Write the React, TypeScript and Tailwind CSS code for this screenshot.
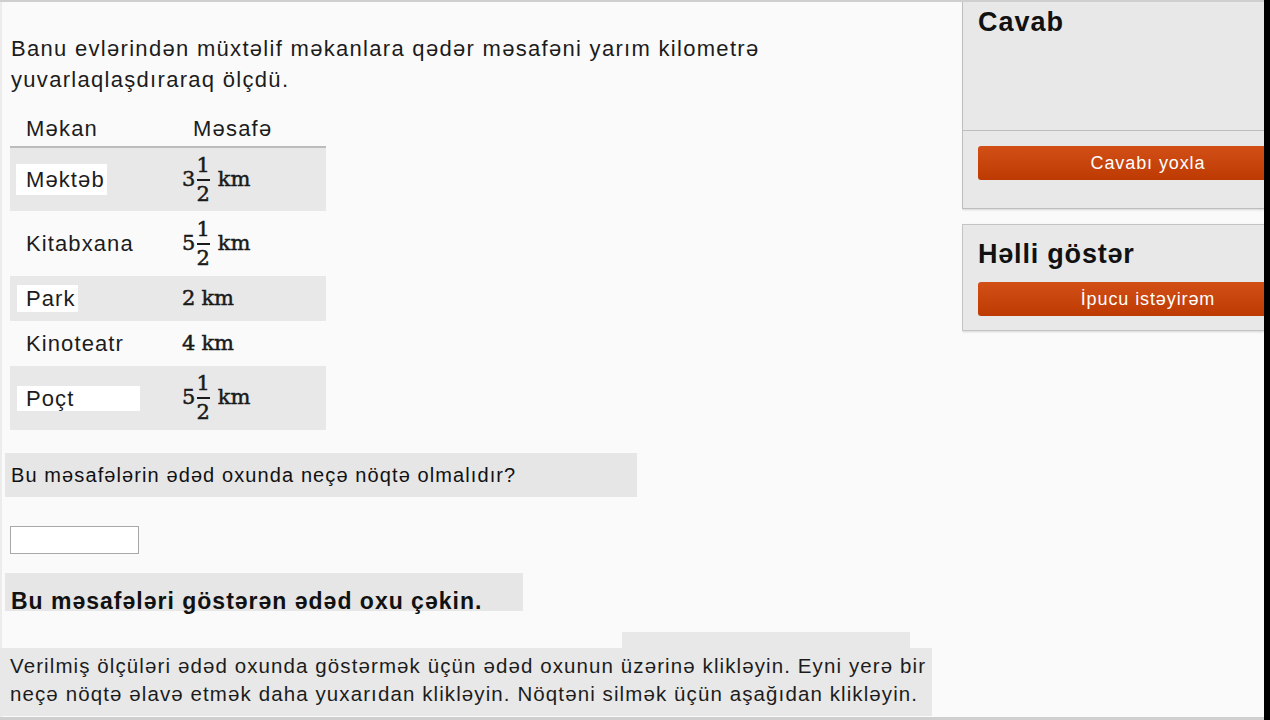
import React from "react";

const sans = "font-['Liberation_Sans','Helvetica_Neue',Arial,sans-serif]";
const serif = "font-['DejaVu_Serif','Liberation_Serif',serif]";

function Distance({ whole, frac }: { whole: string; frac?: boolean }) {
  return (
    <span className={`inline-flex items-center text-[21px] text-[#1a1a1a] [-webkit-text-stroke:0.5px_#1a1a1a] ${serif}`}>
      <span>{whole}</span>
      {frac && (
        <span className="ml-[1px] inline-flex flex-col items-center leading-[25px]">
          <span>1</span>
          <span className="my-[1px] h-[2px] w-[13px] bg-[#1a1a1a]" />
          <span>2</span>
        </span>
      )}
      <span className={frac ? "ml-[8px]" : "ml-[6px]"}>km</span>
    </span>
  );
}

const rows = [
  { place: "Məktəb", whole: "3", frac: true, h: "h-[63px]", gray: true, patch: "bg-white pr-[2px] pl-[10px] -ml-[10px] py-[3px]" },
  { place: "Kitabxana", whole: "5", frac: true, h: "h-[65px]", gray: false, patch: "" },
  { place: "Park", whole: "2", frac: false, h: "h-[45px]", gray: true, patch: "bg-white pr-[2px] pl-[9px] -ml-[9px] py-[1px]" },
  { place: "Kinoteatr", whole: "4", frac: false, h: "h-[45px]", gray: false, patch: "" },
  { place: "Poçt", whole: "5", frac: true, h: "h-[64px]", gray: true, patch: "bg-white pr-[66px] pl-[9px] -ml-[9px]" },
];

function OrangeButton({ label }: { label: string }) {
  return (
    <button className={`ml-[15px] flex h-[34px] w-[340px] shrink-0 items-center justify-center rounded-l-[3px] bg-gradient-to-b from-[#d24f16] to-[#bd3b03] text-[18px] tracking-[0.9px] text-white ${sans}`}>
      {label}
    </button>
  );
}

export default function App() {
  return (
    <div className={`h-[720px] w-[1270px] overflow-hidden bg-[#fafafa] ${sans}`}>
      <div className="flex h-[720px]">
        <div className="flex w-[1264px] flex-col border-t-2 border-b-[3px] border-[#cfcfcf]">
          <div className="flex flex-1">
            <main className="w-[962px] border-l-2 border-[#ececec] pl-[3px] text-[#1c1c1c]">
              <p className="mt-[31px] pl-[6px] text-[22px] leading-[31px] tracking-[1.3px]">
                Banu evlərindən müxtəlif məkanlara qədər məsafəni yarım kilometrə
                <br />
                yuvarlaqlaşdıraraq ölçdü.
              </p>

              <div className="mt-[15px] ml-[5px] w-[316px]">
                <div className="flex h-[38px] items-center border-b-2 border-[#bcbcbc] text-[22px] tracking-[1.2px]">
                  <span className="w-[183px] pl-[16px]">Məkan</span>
                  <span>Məsafə</span>
                </div>
                {rows.map((r) => (
                  <div key={r.place} className={`flex items-center ${r.h} ${r.gray ? "bg-[#e8e8e8]" : ""}`}>
                    <span className="w-[172px] pl-[16px] text-[22px] tracking-[1.1px]">
                      <span className={r.patch}>{r.place}</span>
                    </span>
                    <Distance whole={r.whole} frac={r.frac} />
                  </div>
                ))}
              </div>

              <div className="mt-[23px] flex h-[44px] w-[632px] items-center bg-[#e6e6e6] pl-[6px] text-[20px] tracking-[1.1px] text-[#111]">
                Bu məsafələrin ədəd oxunda neçə nöqtə olmalıdır?
              </div>

              <input className="mt-[29px] ml-[5px] block h-[28px] w-[129px] border border-[#a8a8a8] bg-white" />

              <div className="mt-[19px] flex h-[38px] w-[518px] items-end bg-[#e6e6e6] pl-[6px]">
                <span className="translate-y-[3px] text-[23px] font-bold leading-[26px] tracking-[1px] text-[#111]">
                  Bu məsafələri göstərən ədəd oxu çəkin.
                </span>
              </div>

              <div className="relative mt-[37px] -ml-[5px] w-[932px] bg-[#e8e8e8] pl-[10px] pb-[8px] pt-[4px] text-[20.5px] leading-[28px] tracking-[1.1px] text-[#1c1c1c]">
                <span className="absolute -top-[16px] left-[622px] h-[16px] w-[288px] bg-[#e8e8e8]" />
                Verilmiş ölçüləri ədəd oxunda göstərmək üçün ədəd oxunun üzərinə klikləyin. Eyni yerə bir
                <br />
                neçə nöqtə əlavə etmək daha yuxarıdan klikləyin. Nöqtəni silmək üçün aşağıdan klikləyin.
              </div>
            </main>

            <aside className="w-[302px] overflow-hidden">
              <div className="border-b border-l border-[#bdbdbd] bg-[#e8e8e8] shadow-[0_1px_2px_rgba(0,0,0,0.15)]">
                <h2 className="pl-[15px] pt-[4px] text-[27px] font-bold leading-[32px] tracking-[1px] text-[#111]">Cavab</h2>
                <div className="mt-[92px] border-t border-[#bdbdbd]" />
                <div className="flex pt-[15px] pb-[28px]">
                  <OrangeButton label="Cavabı yoxla" />
                </div>
              </div>
              <div className="mt-[15px] border-y border-l border-[#c4c4c4] bg-[#e8e8e8] shadow-[0_1px_2px_rgba(0,0,0,0.15)]">
                <h2 className="pl-[15px] pt-[13px] text-[27px] font-bold leading-[32px] tracking-[0.8px] text-[#111]">Həlli göstər</h2>
                <div className="flex pt-[12px] pb-[14px]">
                  <OrangeButton label="İpucu istəyirəm" />
                </div>
              </div>
            </aside>
          </div>
        </div>
        <div className="w-[6px] bg-black" />
      </div>
    </div>
  );
}
